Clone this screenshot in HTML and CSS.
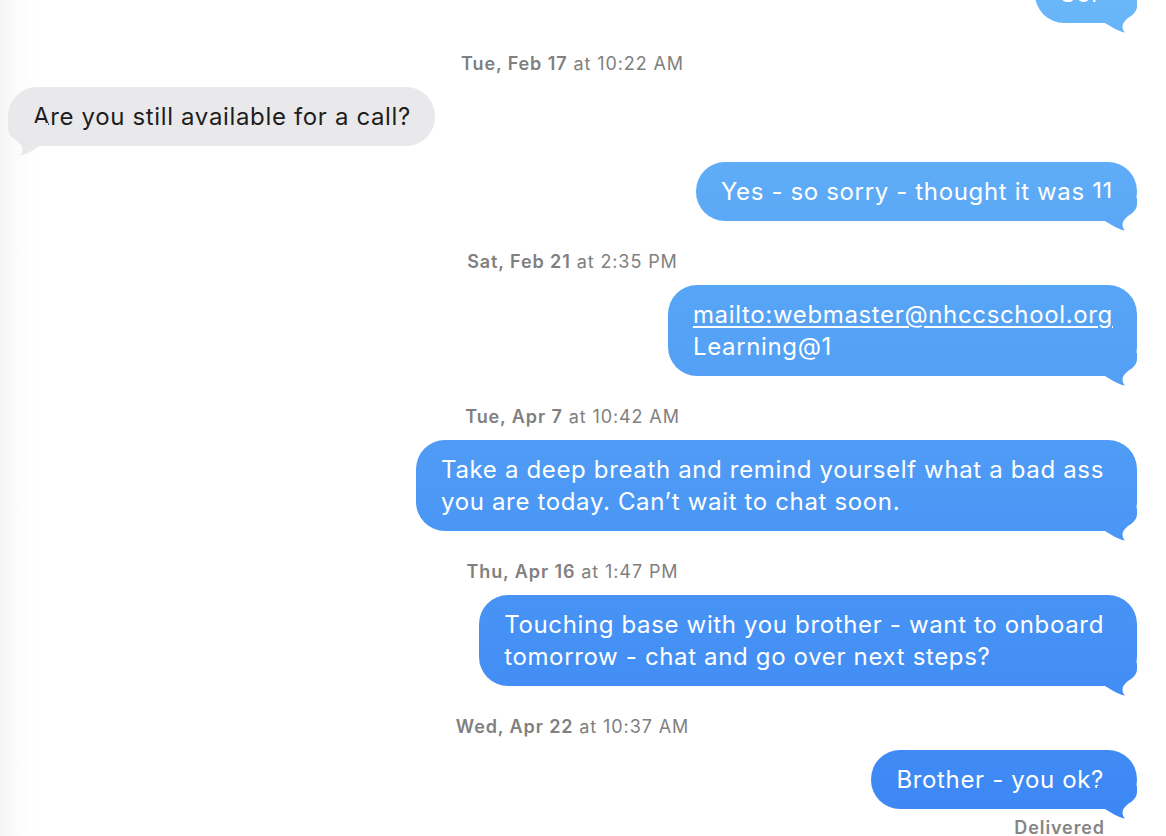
FILE: index.html
```html
<!DOCTYPE html>
<html lang="en">
<head>
<meta charset="utf-8">
<title>Messages</title>
<link rel="stylesheet" href="styles.css">
</head>
<body>
<main class="chat">
  <div class="row out first"><div class="bubble out">Sold</div></div>

  <div class="stamp"><b>Tue, Feb 17</b> at 10:22 AM</div>
  <div class="row in"><div class="bubble in">Are you still available for a call?</div></div>
  <div class="row out next"><div class="bubble out">Yes - so sorry - thought it was 11</div></div>

  <div class="stamp"><b>Sat, Feb 21</b> at 2:35 PM</div>
  <div class="row out"><div class="bubble out"><a class="link" href="#">mailto:webmaster@nhccschool.org</a><br>Learning@1</div></div>

  <div class="stamp"><b>Tue, Apr 7</b> at 10:42 AM</div>
  <div class="row out"><div class="bubble out wide">Take a deep breath and remind yourself what a bad ass<br>you are today. Can’t wait to chat soon.</div></div>

  <div class="stamp"><b>Thu, Apr 16</b> at 1:47 PM</div>
  <div class="row out"><div class="bubble out wide">Touching base with you brother - want to onboard<br>tomorrow - chat and go over next steps?</div></div>

  <div class="stamp"><b>Wed, Apr 22</b> at 10:37 AM</div>
  <div class="row out"><div class="bubble out wide">Brother - you ok?</div></div>
  <div class="status">Delivered</div>
</main>
</body>
</html>
```
FILE: styles.css
```css
html, body {
  margin: 0;
  height: 836px;
  overflow: hidden;
}
body {
  background: linear-gradient(to right, #f5f5f5 0, #fbfbfb 14px, #ffffff 36px);
  font-family: Inter, "Noto Sans", "Liberation Sans", sans-serif;
}
.chat {
  display: flex;
  flex-direction: column;
  padding: 0 29px 0 8px;
}
.row {
  display: flex;
}
.row.out { justify-content: flex-end; }
.row.in { justify-content: flex-start; }
.row.first { margin-top: -36px; }
.row.next { margin-top: 16px; }

.bubble {
  position: relative;
  font-size: 24px;
  letter-spacing: 0.65px;
  line-height: 32px;
  padding: 14px 24px 13px 25px;
  border-radius: 29px;
  white-space: nowrap;
}
.bubble.wide { padding-right: 33px; }
.bubble.out {
  color: #ffffff;
  background: linear-gradient(to bottom, #69b6f8 0, #5aa8f6 240px, #4c98f5 500px, #3c86f4 836px) fixed;
}
.bubble.in {
  color: #1e1e1e;
  background: #e9e9eb;
}
.bubble::after {
  content: "";
  position: absolute;
  bottom: -10px;
  width: 40px;
  height: 33px;
}
.bubble.out::after {
  right: 0;
  background: linear-gradient(to bottom, #69b6f8 0, #5aa8f6 240px, #4c98f5 500px, #3c86f4 836px) fixed;
  clip-path: path("M0,0 H40 V6 C40,12 35,15.5 31,18 C28,20.5 25.5,23 25.5,26.5 C25.5,29 26.5,31 28,32.5 C21,31.5 13,26 8,23 H0 Z");
}
.bubble.in::after {
  left: 0;
  background: #e9e9eb;
  clip-path: path("M40,0 H0 V6 C0,12 5,15.5 9,18 C12,20.5 14.5,23 14.5,26.5 C14.5,29 13.5,31 12,32.5 C19,31.5 27,26 32,23 H40 Z");
}
.link {
  color: #ffffff;
  text-decoration: underline;
  text-underline-offset: 3px;
  text-decoration-thickness: 1.5px;
}

.stamp {
  margin: 30px 0 12px;
  height: 22px;
  line-height: 22px;
  text-align: center;
  font-size: 18px;
  letter-spacing: 0.9px;
  color: #808080;
}
.stamp b { font-weight: 600; }

.status {
  margin-top: 9px;
  padding-right: 32px;
  text-align: right;
  font-size: 18px;
  letter-spacing: 0.9px;
  line-height: 20px;
  font-weight: 600;
  color: #858585;
}
```
